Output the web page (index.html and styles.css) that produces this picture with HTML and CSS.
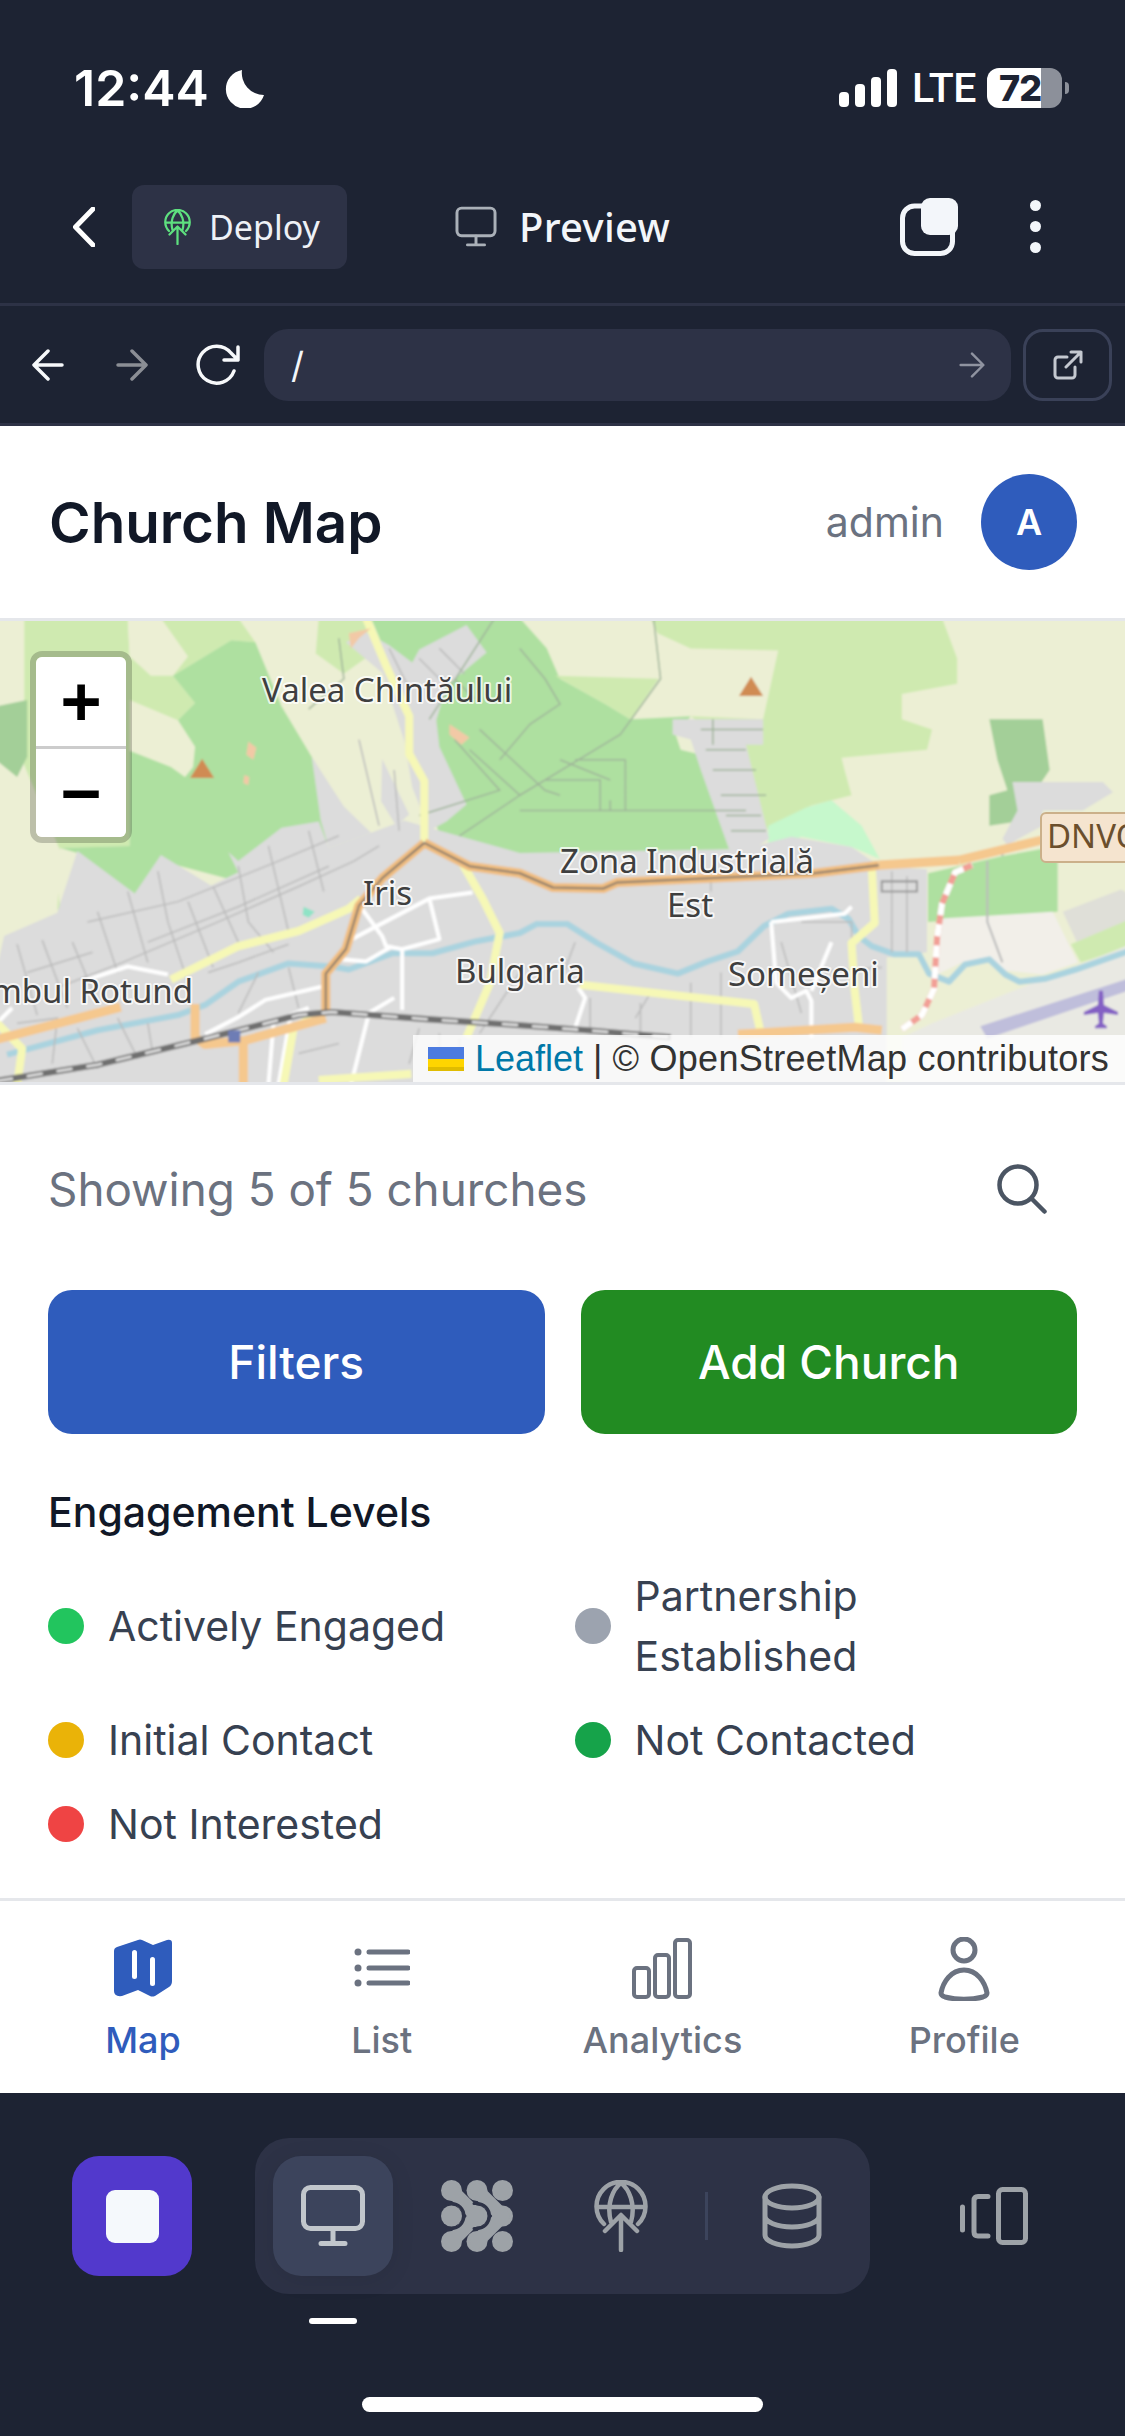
FILE: index.html
```html
<!DOCTYPE html>
<html lang="en">
<head>
<meta charset="utf-8">
<title>Church Map</title>
<link rel="stylesheet" href="styles.css">
</head>
<body>
<div class="phone">
  <div class="status">
    <div class="clock"><span>12:44</span>
      <svg class="moon" width="41" height="39" viewBox="0 0 41 39"><path d="M18 1A19.500 19.500 0 1 0 40 26A22 22 0 0 1 18 1Z"/></svg>
    </div>
    <div class="status-right">
      <svg class="signal" width="58" height="38" viewBox="0 0 58 38"><rect x="0" y="23" width="10" height="15" rx="4"/><rect x="16" y="15" width="10" height="23" rx="4"/><rect x="32" y="8" width="10" height="30" rx="4"/><rect x="48" y="0" width="10" height="38" rx="4"/></svg>
      <span class="lte">LTE</span>
      <div class="battery"><span class="battery-num">72</span></div>
      <div class="battery-nub"></div>
    </div>
  </div>

  <div class="nav">
    <svg class="ic-back" width="22" height="40" viewBox="0 0 22 40"><path d="M20 2 2.500 20 20 38"/></svg>
    <div class="deploy">
      <svg class="ic-globe green" width="27" height="36" viewBox="0 0 54 72"><path d="M10 44A24.500 24.500 0 1 1 44 44M3 27H51M17 42C12 24 19 9 27 3C35 9 42 24 37 42M27 36V70M11 51 27 35 43 51"/></svg>
      <span>Deploy</span>
    </div>
    <div class="preview">
      <svg class="ic-mon" width="42" height="41" viewBox="0 0 64 62"><rect x="3" y="3" width="58" height="42" rx="7"/><path d="M32 46V58M19 59H45"/></svg>
      <span>Preview</span>
    </div>
    <svg class="ic-copy" width="58" height="58" viewBox="0 0 58 58"><rect x="2.500" y="8" width="50" height="47.500" rx="12" class="copy-back"/><rect x="21" y="0" width="37" height="37" rx="9" class="copy-front"/></svg>
    <div class="kebab"><i></i><i></i><i></i></div>
  </div>

  <div class="browser">
    <svg class="arrow white" width="32" height="32" viewBox="0 0 32 32"><path d="M30 16H3M16 2 2 16 16 30"/></svg>
    <svg class="arrow dim" width="32" height="32" viewBox="0 0 32 32"><path d="M2 16H29M16 2 30 16 16 30"/></svg>
    <svg class="arrow white reload" width="46" height="42" viewBox="0 0 46 42"><path d="M39 27A18.500 18.500 0 1 1 36 9L43 16M43 3V16H29"/></svg>
    <div class="url"><span>/</span>
      <svg class="arrow faint" width="26" height="26" viewBox="0 0 32 32"><path d="M2 16H29M16 2 30 16 16 30"/></svg>
    </div>
    <div class="open">
      <svg class="arrow grey" width="30" height="30" viewBox="0 0 30 30"><path d="M14 7H5A3 3 0 0 0 2 10V25A3 3 0 0 0 5 28H19A3 3 0 0 0 22 25V17M13 17 28 2M18 2H28V12"/></svg>
    </div>
  </div>

  <header class="app-head">
    <h1>Church Map</h1>
    <div class="user"><span class="uname">admin</span><div class="avatar">A</div></div>
  </header>

  <section class="map">
    <svg class="map-art" width="1125" height="461" viewBox="0 0 1125 461">
      <defs><filter id="soft" x="-2%" y="-2%" width="104%" height="104%"><feGaussianBlur stdDeviation="0.8"/></filter></defs>
      <g filter="url(#soft)" transform="translate(-3 -3) scale(1.0054 1.013)">
        <rect class="m-base" width="1125" height="461"/>
        <!-- north-west hills -->
        <path class="m-light" d="M27 0H130L132 38 175 57 197 84 180 101 132 131 132 225 63 227 57 244 63 287 27 300 27 145Z"/>
        <path class="m-base" d="M0 0H27V85L0 90ZM0 145 27 145 63 230 60 290 7 314 0 345Z"/>
        <path class="m-base" d="M130 0 150 30 190 38 175 57 153 57 132 38Z"/>
        <path class="m-light" d="M163 0H243L257 24 233 22 175 57 190 38Z"/>
        <path class="m-base" d="M240 0H322L317 33 340 55 283 87 257 24Z"/>
        <path class="m-light" d="M320 0H372L380 30 345 55 317 35Z"/>
        <path class="m-base" d="M283 87 340 55 403 94 417 141 400 194 367 201 313 137Z"/>
        <path class="m-base" d="M132 81 180 101 197 127 195 147 187 157 173 147 132 131Z"/>
        <path class="m-dark" d="M0 87 30 81V137L20 157 0 141Z"/>
        <path class="m-forest" d="M175 57 233 22 257 24 283 87 313 137 343 187 340 215 240 260 163 240 137 275 80 232 63 227 132 225 132 131 173 147 187 157 195 147 197 127 180 101 197 84Z"/>
        <path class="m-forest" d="M40 301 77 291 97 337 77 344 63 317 53 317 43 331Z"/>
        <!-- north-centre -->
        <path class="m-forest" d="M372 0H520L547 30 560 60 605 85 630 100 690 97 675 115 680 130 700 135 745 200 742 228 520 236 440 215 425 160 410 90Z"/>
        <path class="m-base" d="M547 0H650L655 25 658 62 610 68 570 65 560 60 547 30Z"/>
        <path class="m-light" d="M555 57 658 60 630 100 605 85Z"/>
        <path class="m-light" d="M650 0H940L955 40 955 65 900 75 900 100 930 110 925 130 840 138 843 150 850 175 810 185 770 205 748 225 745 135 690 97 762 100 777 32 690 30 657 15Z"/>
        <path class="m-dark" d="M987 100H1040L1047 150 1030 175 1022 200 987 205 987 175 1005 170 995 140Z"/>
        <path class="m-mint" d="M767 205 805 187 830 180 860 205 878 238 850 226 800 216 767 230Z"/>
        <!-- urban -->
        <path class="m-urban" d="M0 345 7 314 60 291 63 281 80 230 137 272 163 234 213 264 240 251 230 231 240 240 283 207 320 201 330 227 372 212 405 200 430 207 520 232 742 228 790 216 850 226 878 245 925 248 925 330 892 335 885 461H0Z"/>
        <path class="m-urban" d="M347 24 367 14 390 27 413 44 420 31 467 7 487 34 447 67 437 101 440 127 467 184 447 201 430 210 413 167 405 121 383 54Z"/>
        <path class="m-urban" d="M383 139 410 194 397 205 382 181Z"/>
        <path class="m-urban" d="M313 137 345 186 372 212 330 227 322 200Z"/>
        <path class="m-urban" d="M672 100H762L762 125 745 125 768 218 745 232 728 228 700 150 690 120 672 115Z"/>
        <!-- east -->
        <path class="m-forest" d="M926 252 1000 235 1055 225 1055 290 1000 295 926 300Z"/>
        <path class="m-base" d="M885 335 925 335 935 300 1060 290 1125 310V461H885Z"/>
        <path class="m-paper" d="M935 297 1050 290 1075 340 1040 352 1003 348 985 335 960 340 935 352Z"/>
        <path class="m-urban2" d="M1060 290 1118 268 1125 272V300L1075 322Z"/>
        <path class="m-light" d="M1068 322 1125 298V325L1078 340Z"/>
        <path class="m-urban" d="M1010 162H1100L1110 172 1080 190 1040 190 1040 205 1005 224 1000 218 1015 190Z"/>
        <path class="m-apron" d="M930 400 1125 323V461H900V414Z"/>
        <path class="m-runway" d="M978 403 1125 356V368L985 415Z"/>
        <!-- water and streets -->
        <path class="m-river" d="M10 431 100 407 180 392 207 382 240 359 290 341 333 344 350 347 393 331 433 331 477 319 520 311 537 302 567 302 597 321 633 341 677 351 707 339 737 329 763 304 787 292 830 287 847 297 857 314 870 324 893 332 917 332 927 351 947 359 963 342 987 337 1003 352 1017 359 1043 356 1073 347 1125 329"/>
        <path class="m-street" d="M20 322 40 392M45 318 70 385M75 320 100 380M100 290 120 350M130 270 150 340M160 250 170 300 190 360M190 280 215 345M215 265 240 320M240 245 250 300 275 330M270 225 290 310M310 210 325 270M60 365 125 340 220 300 300 265 355 240 380 225M90 300 180 280 280 240 340 215M150 320 240 285 330 245M30 350 95 330M210 350 240 340 290 322M300 385 290 345M240 390 260 350M20 400 60 395 55 440M80 405 100 445M120 395 140 435M150 400 155 430M360 120 380 205M395 150 400 210M390 30 410 70M420 40 440 60M440 30 465 55M300 430 340 420M420 405 410 440M440 410V445M460 415V450M650 370 635 395M590 375V410M640 380V414M690 360V414M720 350V414M800 300H850V340M780 320 800 390M810 350 880 345M520 350 480 410M890 250V330M905 255V330M575 320 560 360M710 250V270"/>
        <path class="m-street faint" d="M340 20 345 60 310 90M455 120 500 170 420 195M470 130 520 175 460 215M480 110 545 170 560 175M545 160H600V190M520 190H660M560 140 610 160M610 180V190M625 140V190M660 190H745M575 140H625M495 0 430 100M700 110H762M712 100V125M705 130H745M712 150H755M720 175H765M725 195H760M730 210H765M455 60 475 80M520 30 545 60 560 85 530 105 500 140M653 0 660 60 620 115 520 175"/>
        <path class="m-path" d="M985 240V300L1000 340M1000 225V235"/>
        <path class="m-white" d="M363 287 383 314 387 324 403 327 440 317 430 277M353 317 430 277 473 271M403 327V387M343 337 367 339 393 324M323 364 267 377 240 394 207 411M90 357 130 344 170 352M280 461 292 392 310 385M352 461 370 390 395 375M270 461 275 400M0 400 15 385M770 300 843 292 850 285M770 300 775 360 790 375 805 368 810 378V414M830 320 810 368M578 365 585 375 575 405"/>
        <path class="m-yellow" d="M367 0 387 47 410 97 410 134 425 161 425 221M362 277 350 287 300 309 240 324 173 357M462 241 483 277 500 311 490 361 467 414M870 244 873 301 850 321 853 367 857 401M580 362 753 381 760 411M285 461 295 405 322 390M0 400 25 425 20 461M320 456 412 450"/>
        <path class="m-trunk" d="M0 416 123 384M197 381V414L207 421 247 417 327 395M245 417V461M737 411 853 404 880 407M957 239 1040 219M877 244 957 239"/>
        <path class="m-trunk thin" d="M425 222 383 257 360 284 347 327 327 351 327 391M425 222 470 245 520 252 553 266 603 267 617 261 813 252 877 244"/>
        <path class="m-core" d="M425 222 383 257 360 284 347 327 327 351 327 391M425 222 470 245 520 252 553 266 603 267 617 261 813 252 877 244"/>
        <path class="m-rail" d="M0 457 100 441 200 417 300 392 333 389 427 396 520 402 587 407 670 414"/>
        <path class="m-rail-hi" d="M0 457 100 441 200 417 300 392 333 389 427 396 520 402 587 407 670 414"/>
        <path class="m-lrail" d="M900 406 920 392 932 366 935 316 940 282 953 251 970 244"/>
        <path class="m-lrail-hi" d="M900 406 920 392 932 366 935 316 940 282 953 251 970 244"/>
        <path class="m-box" d="M880 260H915V270H880Z"/>
        <path class="m-peak" d="M192 158H216L204 139ZM738 77H762L750 58Z"/>
        <path class="m-tan" d="M350 15 372 10 360 20 352 30ZM250 122 258 128 255 140 248 135ZM246 155 251 157 250 165 245 163ZM450 105 470 118 462 125 450 115Z"/>
        <path class="m-teal" d="M305 285 316 290 310 296 304 293Z"/>
        <path class="m-station" d="M230 407H242V419H230Z"/>
        <path class="m-plane" d="M1096 368H1100L1101 382 1115 389V392L1101 390 1100 400 1104 403V405H1092V403 L1096 400 1095 390 1081 392V389L1095 382Z"/>
      </g>
      <g class="m-labels">
        <text x="262" y="81">Valea Chintăului</text>
        <text x="363" y="284">Iris</text>
        <text x="193" y="382" class="end">mbul Rotund</text>
        <text x="455" y="362">Bulgaria</text>
        <text x="560" y="252">Zona Industrială</text>
        <text x="667" y="296">Est</text>
        <text x="728" y="365">Someșeni</text>
      </g>
      <rect class="m-shield" x="1041" y="192" width="100" height="49" rx="5"/>
      <text class="m-shield-text" x="1047" y="227">DNVO</text>
    </svg>
    <div class="zoom">
      <div class="zoom-btn">+</div>
      <div class="zoom-btn">−</div>
    </div>
    <div class="attrib">
      <svg class="flag" width="36" height="24" viewBox="0 0 36 24"><rect width="36" height="12" fill="#4c7be0"/><rect y="12" width="36" height="8" fill="#ffd500"/><rect y="20" width="36" height="4" fill="#e0bc00"/></svg>
      <a>Leaflet</a><span class="sep">|</span><span class="osm">© OpenStreetMap contributors</span>
    </div>
  </section>

  <main class="filters">
    <div class="search-row">
      <span class="showing">Showing 5 of 5 churches</span>
      <svg class="ic-search" width="50" height="50" viewBox="0 0 50 50"><circle cx="21" cy="21" r="18.500"/><path d="M34.500 34.500 47.500 47.500"/></svg>
    </div>
    <div class="actions">
      <button class="btn btn-blue">Filters</button>
      <button class="btn btn-green">Add Church</button>
    </div>
    <h2>Engagement Levels</h2>
    <div class="legend">
      <div class="lg"><i class="dot d-green"></i><span>Actively Engaged</span></div>
      <div class="lg"><i class="dot d-grey"></i><span>Partnership Established</span></div>
      <div class="lg"><i class="dot d-yellow"></i><span>Initial Contact</span></div>
      <div class="lg"><i class="dot d-dgreen"></i><span>Not Contacted</span></div>
      <div class="lg"><i class="dot d-red"></i><span>Not Interested</span></div>
    </div>
  </main>

  <nav class="tabs">
    <div class="tab active">
      <svg width="58" height="64" viewBox="0 0 58 64"><path class="t-fill" d="M3 10 24 3Q26 2 28 3L39 8 53 3Q58 2 58 6V44Q58 48 55 50L41 59Q38 60 36 59L24 53 8 59Q0 60 0 54V14Q0 11 3 10Z"/><rect class="t-slit" x="18" y="13" width="5" height="29" rx="2.500"/><rect class="t-slit" x="36" y="20" width="5" height="29" rx="2.500"/></svg>
      <span>Map</span>
    </div>
    <div class="tab tab-list">
      <svg width="56" height="64" viewBox="0 0 56 64"><g class="t-stroke"><path d="M15 15H54M15 31H54M15 46H54"/></g><circle class="t-dot" cx="4" cy="15" r="3.500"/><circle class="t-dot" cx="4" cy="31" r="3.500"/><circle class="t-dot" cx="4" cy="46" r="3.500"/></svg>
      <span>List</span>
    </div>
    <div class="tab tab-wide">
      <svg width="60" height="64" viewBox="0 0 60 64"><g class="t-stroke thin"><rect x="2" y="31" width="15" height="29" rx="3"/><rect x="23" y="18" width="14" height="42" rx="3"/><rect x="43" y="3" width="15" height="57" rx="3"/></g></svg>
      <span>Analytics</span>
    </div>
    <div class="tab">
      <svg width="52" height="64" viewBox="0 0 52 64"><g class="t-stroke"><circle cx="26" cy="13" r="11"/><path d="M26 33C13 33 5 45 3 56C3 58 4 59 7 60C19 63 33 63 45 60C48 59 49 58 49 56C47 45 39 33 26 33Z"/></g></svg>
      <span>Profile</span>
    </div>
  </nav>

  <footer class="dockwrap">
    <div class="dockrow">
      <div class="stop"><i></i></div>
      <div class="dock">
        <div class="dock-item on">
          <svg class="dk-light" width="64" height="62" viewBox="0 0 64 62"><rect x="2.500" y="2.500" width="59" height="41" rx="7"/><path d="M32 45V56M20 58.500H44"/></svg>
        </div>
        <div class="dock-item">
          <svg class="agent" width="72" height="72" viewBox="0 0 72 72">
            <circle cx="10.500" cy="10.500" r="10.500"/><circle cx="36" cy="10.500" r="10.500"/><circle cx="61.500" cy="10.500" r="10.500"/>
            <circle cx="10.500" cy="36" r="10.500"/><circle cx="36" cy="36" r="10.500"/><circle cx="61.500" cy="36" r="10.500"/>
            <circle cx="10.500" cy="61.500" r="10.500"/><circle cx="36" cy="61.500" r="10.500"/><circle cx="61.500" cy="61.500" r="10.500"/>
            <path class="band" d="M10.500 10.500 36 36 10.500 61.500M36 10.500 61.500 36 36 61.500"/>
            <path class="gap" d="M6 23.500H10.500A12.500 12.500 0 0 1 10.500 48.500H6M33 23.500H36A12.500 12.500 0 0 1 36 48.500H33"/>
          </svg>
        </div>
        <div class="dock-item">
          <svg class="ic-globe" width="54" height="72" viewBox="0 0 54 72"><path d="M10 44A24.500 24.500 0 1 1 44 44M3 27H51M17 42C12 24 19 9 27 3C35 9 42 24 37 42M27 36V70M11 51 27 35 43 51"/></svg>
        </div>
        <div class="dock-sep"></div>
        <div class="dock-item">
          <svg class="dk-grey" width="60" height="66" viewBox="0 0 60 66"><ellipse cx="30" cy="14" rx="27" ry="11"/><path d="M3 14V52C3 58 15 63 30 63S57 58 57 52V14M3 33C3 39 15 44 30 44S57 39 57 33"/></svg>
        </div>
      </div>
      <svg class="devices dk-grey" width="68" height="58" viewBox="0 0 68 58"><rect x="38.500" y="2.500" width="27" height="53" rx="4"/><path d="M28 9.500H18Q14 9.500 14 13.500V45Q14 49 18 49H28M2.500 20V43"/></svg>
    </div>
    <div class="indicator"></div>
    <div class="home"></div>
  </footer>
</div>
</body>
</html>
```

FILE: styles.css
```css
* { box-sizing: border-box; }
html, body { margin: 0; padding: 0; }
body { font-family: Inter, "Liberation Sans", sans-serif; background: #1d2333; }
svg { display: block; flex-shrink: 0; }
.phone { width: 1125px; height: 2436px; background: #1d2333; display: flex; flex-direction: column; overflow: hidden; }

/* status bar */
.status { height: 150px; padding: 26px 56px 0 74px; display: flex; align-items: center; justify-content: space-between; color: #fff; }
.clock { display: flex; align-items: center; gap: 15px; font-size: 50px; font-weight: 600; }
.moon { fill: #fff; }
.status-right { display: flex; align-items: center; }
.signal { fill: #fff; }
.lte { font-family: Roboto, sans-serif; font-size: 41px; font-weight: 500; margin-left: 15px; width: 60px; letter-spacing: -0.5px; }
.battery { position: relative; margin-left: 15px; width: 75px; height: 40px; border-radius: 12px; background: linear-gradient(90deg, #fff 72%, #8c909a 72%); }
.battery-num { position: absolute; left: 12px; top: 0; line-height: 40px; font-size: 36px; font-weight: 800; color: #1d2333; letter-spacing: -1px; }
.battery-nub { margin-left: 3px; width: 4px; height: 12px; background: #8c909a; border-radius: 0 6px 6px 0; }

/* nav */
.nav { height: 156px; border-bottom: 3px solid #2d3246; padding: 0 84.500px 0 73px; display: flex; align-items: center; }
.ic-back { fill: none; stroke: #fff; stroke-width: 5; stroke-linecap: round; stroke-linejoin: round; }
.deploy { margin-left: 37px; width: 215px; height: 84px; background: #2d3246; border-radius: 12px; display: flex; align-items: center; padding-left: 32px; gap: 18px; color: #eef1f6; font-family: "Noto Sans", sans-serif; font-size: 34px; }
.ic-globe { fill: none; stroke: #9da2a7; stroke-width: 4.5; stroke-linecap: round; stroke-linejoin: round; }
.ic-globe.green { stroke: #5ee07f; stroke-width: 4.5; }
.preview { margin-left: 108px; display: flex; align-items: center; gap: 22px; color: #f3f6fa; font-family: "Noto Sans", sans-serif; font-size: 40px; font-weight: 500; letter-spacing: 0.3px; }
.ic-mon { fill: none; stroke: #aab0b8; stroke-width: 4.500; stroke-linecap: round; }
.ic-copy { margin-left: auto; }
.copy-back { fill: none; stroke: #f3f6fa; stroke-width: 5; }
.copy-front { fill: #f3f6fa; }
.kebab { margin-left: 71.500px; display: flex; flex-direction: column; gap: 10px; }
.kebab i { display: block; width: 11px; height: 11px; border-radius: 50%; background: #f3f6fa; }

/* browser bar */
.browser { height: 120px; border-bottom: 3px solid #2d3246; display: flex; align-items: center; padding-left: 32px; }
.arrow { fill: none; stroke-linecap: round; stroke-linejoin: round; stroke-width: 3.500; }
.arrow.white { stroke: #f7f9fb; }
.arrow.dim { stroke: #8b8e95; margin-left: 52px; }
.arrow.reload { margin-left: 47px; }
.arrow.faint { stroke: #8f93a0; stroke-width: 3; }
.arrow.grey { stroke: #c4c8d0; stroke-width: 3; }
.url { margin-left: 23px; width: 747px; height: 72px; background: #2d3246; border-radius: 24px; display: flex; align-items: center; justify-content: space-between; padding: 0 26px 0 27px; color: #f3f6fa; font-size: 36px; }
.open { margin-left: 12px; width: 89px; height: 72px; border: 3px solid #3a4158; border-radius: 20px; display: flex; align-items: center; justify-content: center; }

/* app header */
.app-head { height: 195px; background: #fff; border-bottom: 3px solid #e5e7eb; display: flex; align-items: center; justify-content: space-between; padding: 0 48px 0 49px; }
h1 { margin: 0; font-size: 56.500px; font-weight: 600; color: #111827; }
.user { display: flex; align-items: center; gap: 37px; }
.uname { font-size: 41px; color: #6b7280; }
.avatar { width: 96px; height: 96px; border-radius: 50%; background: #2f5cbc; color: #fff; font-size: 36px; font-weight: 600; display: flex; align-items: center; justify-content: center; }

/* map */
.map { position: relative; height: 464px; border-bottom: 3px solid #e5e7eb; overflow: hidden; }
.m-base { fill: #ecefd4; }
.m-light { fill: #cfeab0; }
.m-forest { fill: #aee0a0; }
.m-dark { fill: #a3cf98; }
.m-mint { fill: #c6f8cc; }
.m-urban { fill: #dcdcdc; }
.m-urban2 { fill: #dfdfd8; }
.m-paper { fill: #f2efe9; }
.m-apron { fill: #e9e9e3; }
.m-runway { fill: #bfbedb; }
.m-river { fill: none; stroke: #aad3df; stroke-width: 6; stroke-linejoin: round; }
.m-street { fill: none; stroke: #bbb; stroke-width: 1.500; }
.m-street.faint { stroke: #9fb49a; }
.m-path { fill: none; stroke: #bbb; stroke-width: 2; }
.m-white { fill: none; stroke: #fff; stroke-width: 4; stroke-linejoin: round; }
.m-yellow { fill: none; stroke: #f6f8b6; stroke-width: 8; stroke-linejoin: round; }
.m-trunk { fill: none; stroke: #f5c88e; stroke-width: 9; stroke-linejoin: round; }
.m-trunk.thin { stroke: #f0bd80; stroke-width: 9; }
.m-core { fill: none; stroke: #85786a; stroke-width: 2; stroke-linejoin: round; }
.m-rail { fill: none; stroke: #707070; stroke-width: 6; }
.m-rail-hi { fill: none; stroke: #e4e4e4; stroke-width: 2.500; stroke-dasharray: 16 14; }
.m-lrail { fill: none; stroke: #f29f96; stroke-width: 6; }
.m-lrail-hi { fill: none; stroke: #fff; stroke-width: 6; stroke-dasharray: 12 9; }
.m-box { fill: none; stroke: #999; stroke-width: 2; }
.m-peak { fill: #d08b52; }
.m-tan { fill: #f2c9a6; }
.m-teal { fill: #8fe3c6; }
.m-station { fill: #6e7db5; }
.m-plane { fill: #8461c4; }
.m-labels text { font-family: "Noto Sans", sans-serif; font-size: 33px; fill: #3f3f3f; stroke: rgba(255,255,255,.75); stroke-width: 4px; paint-order: stroke; stroke-linejoin: round; }
.m-labels text.end { text-anchor: end; }
.m-shield { fill: #f5e4cf; stroke: #cbb08a; stroke-width: 2; }
.m-shield-text { font-family: "Noto Sans", sans-serif; font-size: 33px; fill: #6b4f2d; }
.zoom { position: absolute; left: 30px; top: 30px; width: 102px; height: 192px; border: 6px solid rgba(0,0,0,.2); border-radius: 12px; background-clip: padding-box; display: flex; flex-direction: column; }
.zoom-btn { flex: 1; background: #fff; display: flex; align-items: center; justify-content: center; font-family: "DejaVu Sans Mono", monospace; font-weight: 700; font-size: 66px; line-height: 1; color: #000; }
.zoom-btn:first-child { border-bottom: 3px solid #ccc; border-radius: 6px 6px 0 0; }
.zoom-btn:last-child { border-radius: 0 0 6px 6px; }
.attrib { position: absolute; right: 0; bottom: 0; left: 413px; height: 47px; background: rgba(255,255,255,.8); display: flex; align-items: center; padding-left: 15px; font-family: "Liberation Sans", sans-serif; font-size: 36px; color: #333; white-space: nowrap; }
.flag { margin-right: 11px; }
.attrib a { color: #0078a8; }
.sep { margin: 0 10px; }
.osm { letter-spacing: 0.28px; }

/* content */
.filters { flex: 1; background: #fff; padding: 56px 48px 0; }
.search-row { height: 96px; margin-bottom: 53px; display: flex; align-items: center; justify-content: space-between; padding-right: 30px; }
.showing { font-size: 45.800px; color: #6b7280; }
.ic-search { fill: none; stroke: #4b5563; stroke-width: 4.500; stroke-linecap: round; }
.actions { display: flex; gap: 36px; }
.btn { flex: 1; height: 144px; border: 0; border-radius: 24px; color: #fff; font-family: inherit; font-size: 46px; font-weight: 500; }
.btn-blue { background: #2f5cbc; }
.btn-green { background: #228b22; }
h2 { margin: 56px 0 32px; font-size: 41px; line-height: 44px; font-weight: 500; color: #111827; }
.legend { display: grid; grid-template-columns: 1fr 1fr; gap: 24px; font-size: 41px; line-height: 60px; color: #374151; }
.lg { display: flex; align-items: center; gap: 24px; }
.dot { width: 36px; height: 36px; border-radius: 50%; flex-shrink: 0; }
.d-green { background: #22c55e; }
.d-grey { background: #9ca3af; }
.d-yellow { background: #eab308; }
.d-dgreen { background: #16a34a; }
.d-red { background: #ef4444; }

/* tabs */
.tabs { height: 195px; background: #fff; border-top: 3px solid #e5e7eb; display: flex; justify-content: space-around; padding: 36px 22px 0; }
.tab { display: flex; flex-direction: column; align-items: center; color: #6b7280; font-size: 36px; font-weight: 500; line-height: 44px; }
.tab span { margin-top: 17px; }
.tab.active { color: #2f5cbc; }
.tab-list { margin-left: 4px; }
.tab-wide { margin-left: 4px; }
.t-fill { fill: #2f5cbc; }
.t-slit { fill: #fff; }
.t-stroke { fill: none; stroke: #6b7280; stroke-width: 5; stroke-linecap: round; }
.t-stroke.thin { stroke-width: 4; }
.t-dot { fill: #6b7280; }

/* dock */
.dockwrap { height: 343px; background: #1d2333; padding-top: 45px; }
.dockrow { display: flex; align-items: center; padding-left: 72px; }
.stop { width: 120px; height: 120px; border-radius: 27px; background: #5239cc; display: flex; align-items: center; justify-content: center; }
.stop i { display: block; width: 53px; height: 53px; border-radius: 9px; background: #f5f9fc; }
.dock { margin-left: 63px; width: 615px; height: 156px; border-radius: 34px; background: #2d3246; display: flex; align-items: center; padding: 0 18px; gap: 24px; }
.dock-item { width: 120px; height: 120px; border-radius: 28px; display: flex; align-items: center; justify-content: center; }
.dock-item.on { background: #3c445c; box-shadow: 0 4px 24px rgba(0,0,0,.08); }
.dock-sep { width: 3px; height: 48px; background: #3c445c; }
.dk-light { fill: none; stroke: #c2c7cc; stroke-width: 5; stroke-linecap: round; }
.dk-grey { fill: none; stroke: #9da2a7; stroke-width: 5; stroke-linecap: round; }
.agent circle { fill: #9da2a7; }
.agent .band { fill: none; stroke: #9da2a7; stroke-width: 14; stroke-linecap: round; stroke-linejoin: round; }
.agent .gap { fill: none; stroke: #2d3246; stroke-width: 3; stroke-linecap: round; }
.devices { margin-left: 90px; }
.indicator { width: 48px; height: 6px; margin: 24px 0 0 309px; border-radius: 3px; background: #fff; }
.home { width: 401px; height: 15px; margin: 73px auto 0; border-radius: 8px; background: #fff; }
```
